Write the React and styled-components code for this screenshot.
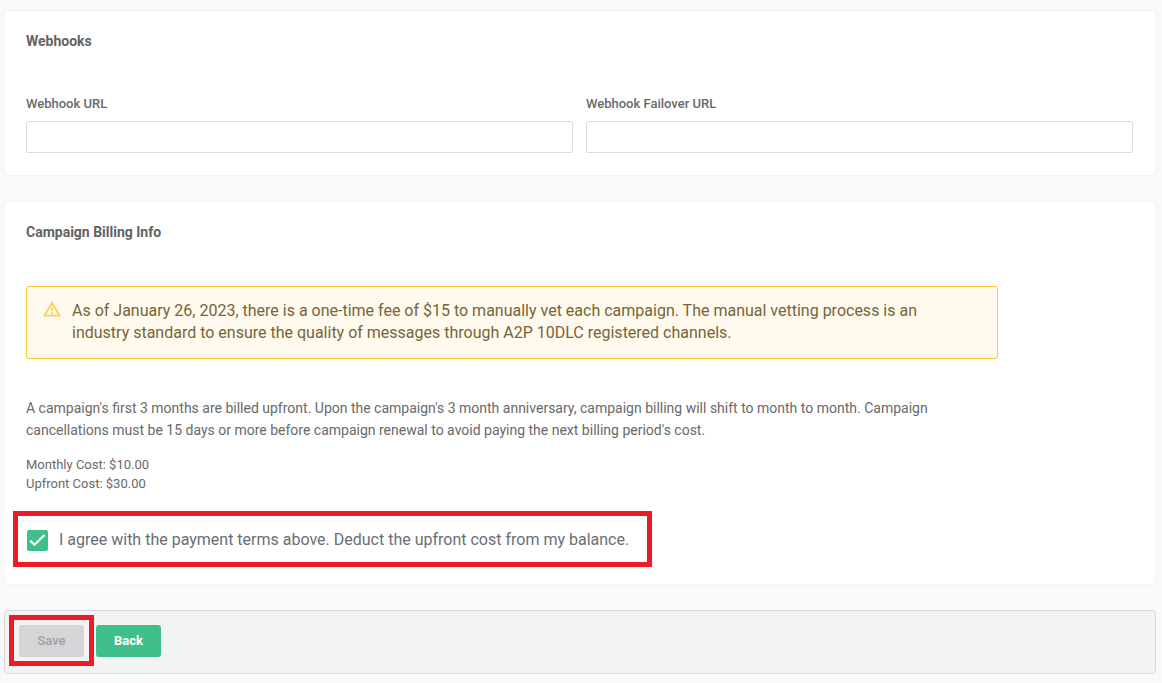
import { useState } from "react";
import styled, { createGlobalStyle } from "styled-components";

const GlobalStyle = createGlobalStyle`
  * {
    box-sizing: border-box;
  }

  body {
    margin: 0;
    background-color: #f8f9fb;
    color: #696969;
    font-family: Roboto, "Liberation Sans", sans-serif;
    font-size: 14px;
  }
`;

const Page = styled.form`
  display: flex;
  flex-direction: column;
  gap: 25px;
  padding: 10px 6px 9px 4px;
`;

const Card = styled.section`
  padding: 20px 22px 22px 21px;
  border: 1px solid #f2f3f5;
  border-radius: 4px;
  background-color: #fff;
`;

const CardTitle = styled.h2`
  margin: 0;
  font-size: 14px;
  font-weight: 700;
  line-height: 20px;
  color: #636363;
`;

const FieldRow = styled.div`
  display: grid;
  grid-template-columns: 1fr 1fr;
  gap: 13px;
  margin-top: 43px;
`;

const Field = styled.div`
  display: flex;
  flex-direction: column;
  gap: 7px;
`;

const FieldLabel = styled.label`
  font-size: 13px;
  font-weight: 500;
  line-height: 20px;
`;

const TextInput = styled.input`
  width: 100%;
  height: 32px;
  padding: 0 10px;
  border: 1px solid #dcdcdc;
  border-radius: 2px;
  background-color: #fff;
  color: inherit;
  font: inherit;
`;

const Notice = styled.div`
  display: flex;
  gap: 11px;
  max-width: 972px;
  margin-top: 44px;
  padding: 13px 44px 14px 16px;
  border: 1px solid #fccb31;
  border-radius: 3px;
  background-color: #fffaed;
  color: #75653a;
`;

const NoticeText = styled.p`
  flex: 1;
  margin: 0;
  font-size: 16px;
  line-height: 22px;
`;

const Terms = styled.p`
  max-width: 972px;
  margin: 38px 0 0;
  font-size: 14px;
  line-height: 22px;
`;

const Costs = styled.ul`
  margin: 14px 0 0;
  padding: 0;
  list-style: none;
  font-size: 13px;
  line-height: 19px;
`;

const Highlight = styled.div`
  position: relative;
  width: fit-content;

  &::after {
    content: "";
    position: absolute;
    inset: ${(props) => props.$inset};
    border: 5px solid #ed1c24;
    pointer-events: none;
  }
`;

const AgreeRow = styled(Highlight)`
  margin: 36px 0 11px;
`;

const AgreeLabel = styled.label`
  display: flex;
  align-items: center;
  gap: 11px;
  font-size: 16px;
  line-height: 22px;
  color: #6b6e74;
  cursor: pointer;
`;

const CheckHolder = styled.span`
  display: grid;
  width: 22px;
  height: 22px;

  > * {
    grid-area: 1 / 1;
  }

  svg {
    pointer-events: none;
  }
`;

const CheckInput = styled.input`
  appearance: none;
  width: 21px;
  height: 21px;
  margin: 1px 0 0 1px;
  border: 1px solid #3fbf8a;
  border-radius: 2px;
  background-color: #fff;
  cursor: pointer;

  &:checked {
    background-color: #3fbf8a;
  }
`;

const Actions = styled.footer`
  display: flex;
  gap: 12px;
  padding: 14px 14px 16px;
  border: 1px solid #d8dadd;
  border-radius: 4px;
  background-color: #f1f3f5;
`;

const Button = styled.button`
  min-width: 65px;
  height: 32px;
  padding: 0 18px 2px;
  border: 0;
  border-radius: 3px;
  background-color: #3fbf8a;
  color: #fff;
  font-family: inherit;
  font-size: 13px;
  font-weight: 700;
  cursor: pointer;

  &:disabled {
    background-color: #d4d5d7;
    color: #9fa1a4;
    font-weight: 500;
    cursor: default;
  }
`;

function WarningIcon() {
  return (
    <svg width="18" height="18" viewBox="0 0 18 18" fill="none" aria-hidden="true">
      <path d="M9 2.8 16.4 15.6H1.6Z" stroke="#fdd05a" strokeWidth="1.9" />
      <path d="M9 7v4.2M9 12.3v1.8" stroke="#fdd05a" strokeWidth="1.8" />
    </svg>
  );
}

function App() {
  const [url, setUrl] = useState("");
  const [failoverUrl, setFailoverUrl] = useState("");
  const [agreed, setAgreed] = useState(true);

  return (
    <>
      <GlobalStyle />
      <Page onSubmit={(e) => e.preventDefault()}>
        <Card>
          <CardTitle>Webhooks</CardTitle>
          <FieldRow>
            <Field>
              <FieldLabel htmlFor="webhook-url">Webhook URL</FieldLabel>
              <TextInput
                id="webhook-url"
                type="text"
                value={url}
                onChange={(e) => setUrl(e.target.value)}
              />
            </Field>
            <Field>
              <FieldLabel htmlFor="failover-url">Webhook Failover URL</FieldLabel>
              <TextInput
                id="failover-url"
                type="text"
                value={failoverUrl}
                onChange={(e) => setFailoverUrl(e.target.value)}
              />
            </Field>
          </FieldRow>
        </Card>

        <Card>
          <CardTitle>Campaign Billing Info</CardTitle>
          <Notice>
            <WarningIcon />
            <NoticeText>
              As of January 26, 2023, there is a one-time fee of $15 to manually
              vet each campaign. The manual vetting process is an industry
              standard to ensure the quality of messages through A2P 10DLC
              registered channels.
            </NoticeText>
          </Notice>
          <Terms>
            A campaign's first 3 months are billed upfront. Upon the campaign's
            3 month anniversary, campaign billing will shift to month to month.
            Campaign cancellations must be 15 days or more before campaign
            renewal to avoid paying the next billing period's cost.
          </Terms>
          <Costs>
            <li>Monthly Cost: $10.00</li>
            <li>Upfront Cost: $30.00</li>
          </Costs>
          <AgreeRow $inset="-18px -23px -16px -13px">
            <AgreeLabel>
              <CheckHolder>
                <CheckInput
                  type="checkbox"
                  checked={agreed}
                  onChange={(e) => setAgreed(e.target.checked)}
                />
                <svg width="22" height="22" viewBox="0 0 22 22" fill="none">
                  <path d="m4.2 11.6 4.3 4.2 10-9.8" stroke="#fff" strokeWidth="2.2" />
                </svg>
              </CheckHolder>
              I agree with the payment terms above. Deduct the upfront cost from
              my balance.
            </AgreeLabel>
          </AgreeRow>
        </Card>

        <Actions>
          <Highlight $inset="-10px -10px -9px -10px">
            <Button type="submit" disabled>
              Save
            </Button>
          </Highlight>
          <Button type="button">Back</Button>
        </Actions>
      </Page>
    </>
  );
}

export default App;
